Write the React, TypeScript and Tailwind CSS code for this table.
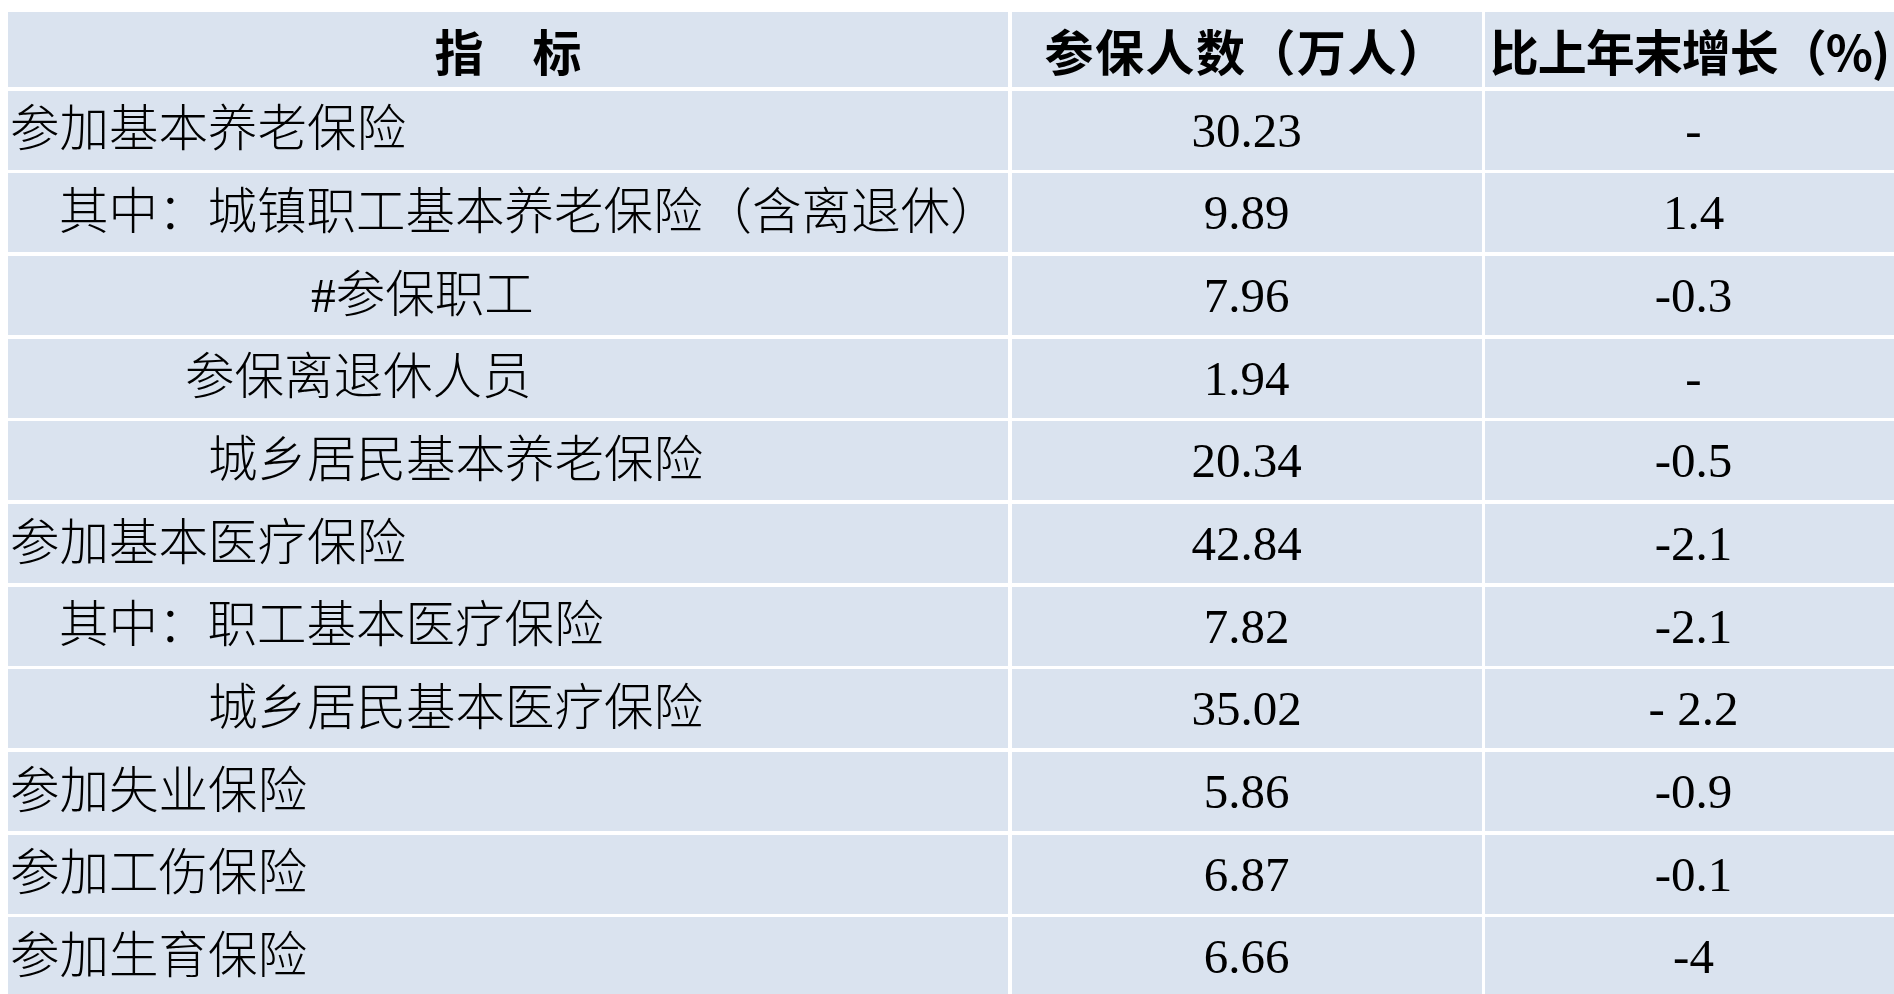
const rows: { label: string; indent: string; count: string; growth: string }[] = [
  { label: "参加基本养老保险", indent: "pl-[2px]", count: "30.23", growth: "-" },
  { label: "其中：城镇职工基本养老保险（含离退休）", indent: "pl-[51px]", count: "9.89", growth: "1.4" },
  { label: "#参保职工", indent: "pl-[303px]", count: "7.96", growth: "-0.3" },
  { label: "参保离退休人员", indent: "pl-[177px]", count: "1.94", growth: "-" },
  { label: "城乡居民基本养老保险", indent: "pl-[200px]", count: "20.34", growth: "-0.5" },
  { label: "参加基本医疗保险", indent: "pl-[2px]", count: "42.84", growth: "-2.1" },
  { label: "其中：职工基本医疗保险", indent: "pl-[51px]", count: "7.82", growth: "-2.1" },
  { label: "城乡居民基本医疗保险", indent: "pl-[200px]", count: "35.02", growth: "- 2.2" },
  { label: "参加失业保险", indent: "pl-[2px]", count: "5.86", growth: "-0.9" },
  { label: "参加工伤保险", indent: "pl-[2px]", count: "6.87", growth: "-0.1" },
  { label: "参加生育保险", indent: "pl-[2px]", count: "6.66", growth: "-4" },
];

export default function App() {
  return (
    <div className="h-[994px] w-[1894px] overflow-hidden bg-white pt-[12px] pl-[8px] text-black">
      {/* Header */}
      <div className="grid grid-cols-[1000px_470px_409px] gap-x-[3.5px] font-['Noto_Sans_CJK_SC',sans-serif] text-[49px] font-bold leading-none">
        <div className="flex h-[75px] items-center justify-center bg-[#dae3ef] whitespace-nowrap">指　标</div>
        <div className="flex h-[75px] items-center justify-center bg-[#dae3ef] whitespace-nowrap tracking-[1.5px]">参保人数（万人）</div>
        <div className="flex h-[75px] items-center justify-center bg-[#dae3ef] whitespace-nowrap tracking-[-1px]">比上年末增长（%)</div>
      </div>

      {/* Body */}
      <div className="mt-[3.5px] grid grid-cols-[1000px_470px_409px] gap-x-[3.5px] gap-y-[3.7px] font-['Liberation_Serif','Noto_Sans_CJK_SC',serif] text-[49px] font-light leading-none">
        {rows.map((row) => (
          <div key={row.label} className="contents">
            <div className={`flex h-[79px] items-center bg-[#dae3ef] whitespace-nowrap text-[49.5px] ${row.indent}`}>{row.label}</div>
            <div className="flex h-[79px] items-center justify-center bg-[#dae3ef] whitespace-pre">{row.count}</div>
            <div className="flex h-[79px] items-center justify-center bg-[#dae3ef] whitespace-pre pl-[8px]">{row.growth}</div>
          </div>
        ))}
      </div>
    </div>
  );
}
